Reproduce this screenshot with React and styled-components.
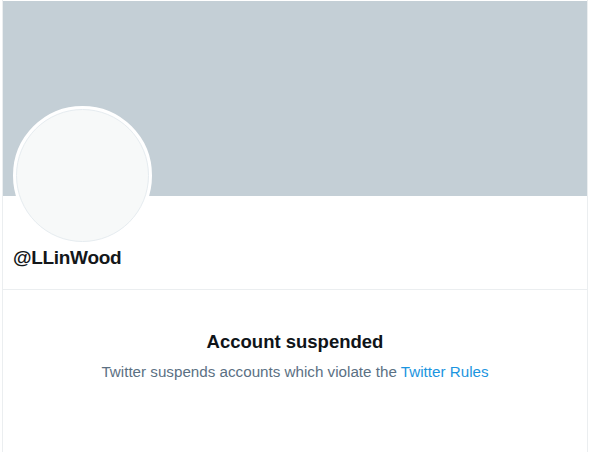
import React from "react";
import styled, { createGlobalStyle } from "styled-components";

const GlobalStyle = createGlobalStyle`
  body {
    margin: 0;
    background: #ffffff;
    font-family: "Liberation Sans", Arial, sans-serif;
  }
`;

const Column = styled.div`
  margin-left: 2px;
  width: 586px;
  height: 452px;
  border-left: 1px solid #ebeef0;
  border-right: 1px solid #ebeef0;
  padding-top: 1px;
  box-sizing: border-box;
`;

const Banner = styled.div`
  height: 195px;
  background: #c4cfd6;
`;

const ProfileHead = styled.div`
  display: flex;
  flex-direction: column;
  align-items: flex-start;
  padding: 0 10px;
  height: 93px;
  border-bottom: 1px solid #ebeef0;
`;

const Avatar = styled.div`
  width: 139px;
  height: 139px;
  margin-top: -90px;
  border-radius: 50%;
  border: 3px solid #ffffff;
  box-sizing: border-box;
  background: #ffffff;
  display: flex;
`;

const AvatarInner = styled.div`
  flex: 1;
  border-radius: 50%;
  background: #f7f9f9;
  border: 1px solid #e6ecf0;
`;

const Handle = styled.div`
  margin-top: 1px;
  font-size: 19px;
  letter-spacing: -0.3px;
  font-weight: 700;
  color: #14171a;
  line-height: 24px;
`;

const Notice = styled.div`
  display: flex;
  flex-direction: column;
  align-items: center;
  padding-top: 40px;
`;

const Title = styled.h2`
  margin: 0;
  font-size: 18.5px;
  font-weight: 700;
  color: #0f1419;
  line-height: 24px;
`;

const Sub = styled.p`
  margin: 8px 0 0;
  font-size: 15.2px;
  line-height: 20px;
  color: #5b7083;
`;

const RulesLink = styled.a`
  color: #1b95e0;
  text-decoration: none;
`;

export default function App() {
  return (
    <>
      <GlobalStyle />
      <Column>
        <Banner />
        <ProfileHead>
          <Avatar>
            <AvatarInner />
          </Avatar>
          <Handle>@LLinWood</Handle>
        </ProfileHead>
        <Notice>
          <Title>Account suspended</Title>
          <Sub>
            Twitter suspends accounts which violate the{" "}
            <RulesLink href="#">Twitter Rules</RulesLink>
          </Sub>
        </Notice>
      </Column>
    </>
  );
}
